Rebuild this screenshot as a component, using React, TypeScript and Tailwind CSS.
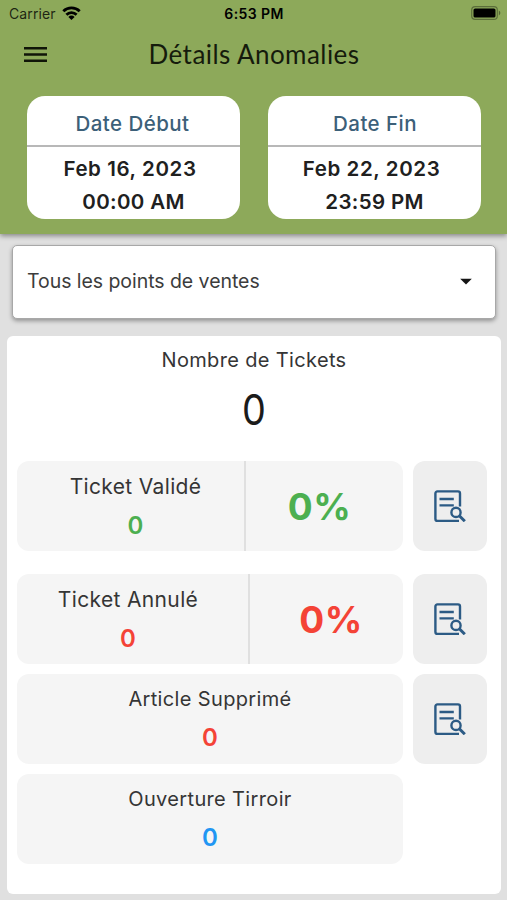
import { MdArrowDropDown } from 'react-icons/md';

const dates = [
  { title: 'Date Début', day: 'Feb 16, 2023', time: '00:00 AM', titleOffset: 'pr-[2px]', offset: 'pr-[7px]' },
  { title: 'Date Fin', day: 'Feb 22, 2023', time: '23:59 PM', titleOffset: 'pl-[1px]', offset: 'pr-[6px]' },
];

const StatusBar = () => (
  <div className="flex h-7 items-center justify-between pl-[9px] pr-[6px] text-black">
    <div className="flex w-[100px] items-center gap-[6px]">
      <span className="text-[14px] leading-7 tracking-[0.1px] text-black/80">Carrier</span>
      <svg className="mt-[-2px] h-[14px] w-[19px]" viewBox="0 0 19 14" fill="none" stroke="#000" strokeWidth="2.8">
        <path d="M1.3 5.3a11.7 11.7 0 0 1 16.4 0" />
        <path d="M4.4 8.7a7.2 7.2 0 0 1 10.2 0" />
        <path d="M9.5 14 6.4 10.9a4.4 4.4 0 0 1 6.2 0z" fill="#000" stroke="none" />
      </svg>
    </div>
    <span className="mr-[2px] text-[14px] font-semibold leading-7 tracking-[0.4px]">6:53 PM</span>
    <div className="flex w-[100px] justify-end">
      <svg className="mt-[-2px] h-[14px] w-[30px]" viewBox="0 0 30 14">
        <rect x="0.7" y="0.7" width="25.6" height="12.6" rx="3.4" fill="none" stroke="#000" strokeOpacity="0.35" strokeWidth="1.2" />
        <rect x="2.5" y="2.5" width="22" height="9" rx="1.6" fill="#000" />
        <path d="M27.8 4.6c2 .8 2 4 0 4.8z" fill="#000" fillOpacity="0.4" />
      </svg>
    </div>
  </div>
);

const DetailsButton = () => (
  <button className="flex h-[90px] w-[74px] items-center justify-center rounded-[12px] bg-[#eeeeee]">
    <svg className="h-8 w-8" viewBox="0 0 32 32" fill="none" stroke="#2c5b85" strokeWidth="2.4">
      <path d="M26 16.5V3.4A2 2 0 0 0 24 1.4H3.4a2 2 0 0 0-2 2V29a2 2 0 0 0 2 2H25" />
      <path d="M5.5 9h14.3M5.5 15.4h14.3" />
      <circle cx="22" cy="22.4" r="4.6" />
      <path d="m25.3 25.7 5.5 5.5" strokeWidth="3" />
    </svg>
  </button>
);

const App = () => {
  return (
    <div className="h-[900px] w-full overflow-hidden bg-[#e0e0e0] font-['Inter',sans-serif]">
      <header className="relative h-[234px] bg-[#8da95a] shadow-[0_2px_5px_rgba(0,0,0,0.4)]">
        <StatusBar />
        <div className="grid h-[52px] grid-cols-[70px_1fr_70px] items-center">
          <svg className="ml-6 h-[15px] w-[23px]" viewBox="0 0 23 15" stroke="#101508" strokeWidth="2.4">
            <path d="M0 1.2h23M0 7.5h23M0 13.8h23" />
          </svg>
          <h1 className="pl-[1px] text-center font-['Lato',sans-serif] text-[26px] leading-[52px] tracking-[0.45px] text-[#151b0c]">Détails Anomalies</h1>
        </div>
        <div className="mt-4 flex gap-[28px] pl-[27px] pr-[26px]">
          {dates.map((date) => (
            <div key={date.title} className="h-[123px] flex-1 rounded-[18px] bg-white text-center text-[20.5px]">
              <div className="h-[51px] border-b-2 border-[#b8b8b8] pt-[12px] font-medium leading-8 tracking-[0.45px] text-[#3c6079]">
                <p className={date.titleOffset}>{date.title}</p>
              </div>
              <div className="pt-[5px] font-semibold leading-[33px] tracking-[0.6px] text-[#202020]">
                <p className={date.offset}>{date.day}</p>
                <p className="tracking-[0.35px]">{date.time}</p>
              </div>
            </div>
          ))}
        </div>
      </header>

      <div className="ml-3 mr-[11px] mt-[11px] flex h-[74px] items-center justify-between rounded-[5px] border-[1.5px] border-[#a8a8a8] bg-white pl-[14px] pr-[15px] shadow-[0_2px_4px_rgba(0,0,0,0.35)]">
        <span className="text-[19.5px] tracking-[-0.05px] text-[#3c3c3c]">Tous les points de ventes</span>
        <MdArrowDropDown className="mt-[-2px] h-7 w-7 text-[#151515]" />
      </div>

      <main className="ml-[7px] mr-[6px] mt-[17px] h-[558px] rounded-[6px] bg-white pl-[10px] text-[20px] tracking-[0.35px] text-[#353535]">
        <div className="h-[125px] pr-[10px] pt-[8px] text-center">
          <p className="leading-8">Nombre de Tickets</p>
          <p className="scale-x-90 pt-[9px] text-[42px] leading-[50px] tracking-normal text-[#1b1b1b]">0</p>
        </div>

        <div className="flex gap-[10px]">
          <div className="flex h-[90px] w-[386px] rounded-[12px] bg-[#f5f5f5]">
            <div className="w-[229px] border-r-2 border-[#e0e0e0] pl-[10px] pt-[10px] text-center">
              <p className="text-[21px] leading-8 tracking-[0.35px]">Ticket Validé</p>
              <p className="pt-[7px] text-[24px] font-semibold leading-8 text-[#4caf50]">0</p>
            </div>
            <div className="flex flex-1 items-center justify-center pr-[10px] pt-[2px] text-[37px] font-bold tracking-[0.4px] text-[#4caf50]">0%</div>
          </div>
          <DetailsButton />
        </div>

        <div className="mt-[23px] flex gap-[10px]">
          <div className="flex h-[90px] w-[386px] rounded-[12px] bg-[#f5f5f5]">
            <div className="w-[233px] border-r-2 border-[#e0e0e0] pr-[9px] pt-[10px] text-center">
              <p className="text-[21px] leading-8 tracking-[0.35px]">Ticket Annulé</p>
              <p className="pt-[7px] text-[24px] font-semibold leading-8 text-[#f44336]">0</p>
            </div>
            <div className="flex flex-1 items-center justify-center pl-[9px] pt-[2px] text-[37px] font-bold tracking-[0.4px] text-[#f44336]">0%</div>
          </div>
          <DetailsButton />
        </div>

        <div className="mt-[10px] flex gap-[10px]">
          <div className="h-[90px] w-[386px] rounded-[12px] bg-[#f5f5f5] pt-[9px] text-center">
            <p className="leading-8">Article Supprimé</p>
            <p className="pt-[7px] text-[24px] font-semibold leading-8 text-[#f44336]">0</p>
          </div>
          <DetailsButton />
        </div>

        <div className="mt-[10px] h-[90px] w-[386px] rounded-[12px] bg-[#f5f5f5] pt-[9px] text-center">
          <p className="leading-8">Ouverture Tirroir</p>
          <p className="pt-[7px] text-[24px] font-semibold leading-8 text-[#2196f3]">0</p>
        </div>
      </main>
    </div>
  );
};

export default App;
